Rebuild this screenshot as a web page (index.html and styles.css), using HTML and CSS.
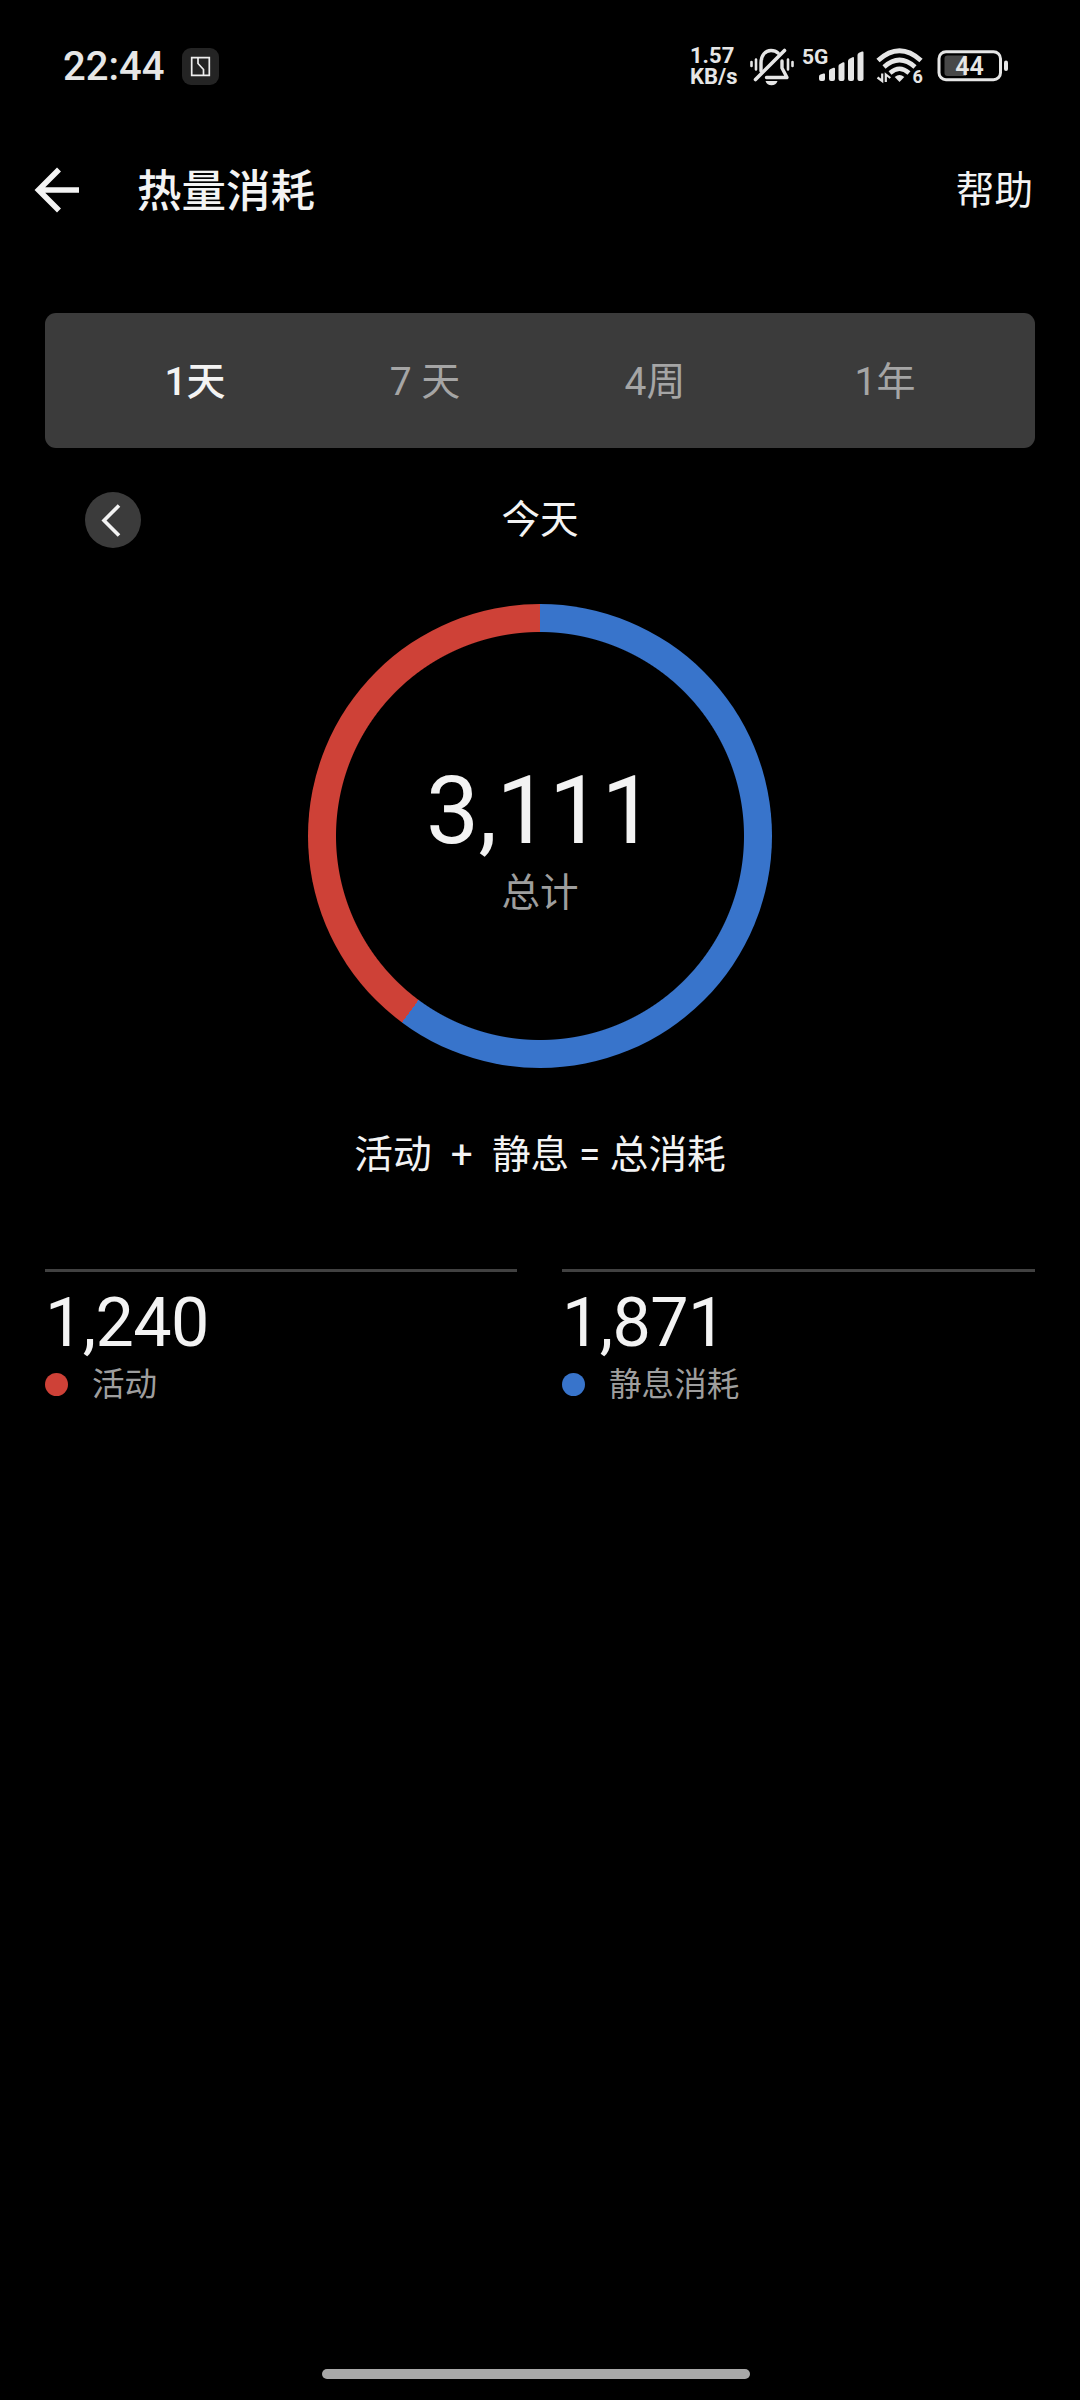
FILE: index.html
```html
<!DOCTYPE html>
<html lang="zh-CN">
<head>
  <meta charset="UTF-8">
  <meta name="viewport" content="width=device-width, initial-scale=1.0">
  <title>热量消耗</title>
  <link rel="stylesheet" href="styles.css">
</head>
<body>
  <div class="screen">

    <!-- 状态栏 -->
    <div class="status-bar">
      <span class="clock">22:44</span>
      <svg class="app-icon" width="37" height="37" viewBox="0 0 37 37" fill="none">
        <rect width="37" height="37" rx="9" fill="#242424"/>
        <path d="M9.7 9.7h17.6v17.6H9.7zM16 10v5.5l5.5 6V27" stroke="#eee" stroke-width="1.7"/>
      </svg>
      <div class="net-speed"><span>1.57</span><span>KB/s</span></div>
      <!-- 静音 -->
      <svg class="bell" width="46" height="42" viewBox="0 0 46 42" fill="none" stroke="#e6e6e6" stroke-width="3" stroke-linecap="round">
        <path d="M2.5 17v4M7 14.500v10M39 14.500v10M43.500 17v4" stroke-width="2.600"/>
        <path d="M12 26V18C12 10 16.500 5.500 22 5.500C25 5.500 27.500 6.500 29 8" stroke-width="3.400"/>
        <path d="M35.500 5.500L6.500 34.500" stroke-width="3.600"/>
        <path d="M33 16V23L38 32.500H17.500" stroke-width="3.400" stroke-linejoin="round"/>
        <path d="M16.500 36h12c-1 3-3 4.200-6 4.200s-5-1.200-6-4.200z" fill="#e6e6e6" stroke="none"/>
      </svg>
      <!-- 信号 -->
      <svg class="signal" width="64" height="44" viewBox="0 -4 64 44" fill="#e6e6e6">
        <text class="signal-text" x="0" y="15.500">5G</text>
        <path d="M17 28.500q0-1.500 1.500-2l3-1q1.500-.5 1.500 1V31q0 2-2 2h-2q-2 0-2-2z"/>
        <path d="M27 23q0-1.500 1.500-2l3-1.200q1.500-.5 1.500 1V31q0 2-2 2h-2q-2 0-2-2z"/>
        <path d="M36.500 18q0-1.500 1.500-2l3-1.700q1.500-.5 1.500 1V31q0 2-2 2h-2q-2 0-2-2z"/>
        <path d="M46 13q0-1.500 1.500-2.300l3-1.500q1.500-.5 1.500 1V31q0 2-2 2h-2q-2 0-2-2z"/>
        <path d="M55.500 7q0-1.500 1.500-2.300l3-1.200q1.500-.5 1.500 1V31q0 2-2 2h-2q-2 0-2-2z"/>
      </svg>
      <!-- WiFi -->
      <svg class="wifi" width="48" height="38" viewBox="0 0 48 38" fill="none" stroke="#e6e6e6">
        <path d="M2 13.500Q23.500-6 45 13.500" stroke-width="4.800"/>
        <path d="M8 20Q23.500 6 39 20" stroke-width="4.600"/>
        <path d="M14 26Q23.500 17.500 33 26" stroke-width="4.400"/>
        <path d="M23.500 35l-4.800-5q4.800-4 9.600 0z" fill="#e6e6e6" stroke="none"/>
        <path d="M6.200 26.500V34L1.500 30.500M9.800 35v-7.500l4.500 3.500" stroke-width="2.200"/>
        <text class="wifi-text" x="36.500" y="35.500">6</text>
      </svg>
      <!-- 电池 -->
      <svg class="battery" width="72" height="32" viewBox="0 0 72 32">
        <rect x="2" y="1.700" width="61.500" height="28" rx="7" fill="none" stroke="#e6e6e6" stroke-width="3"/>
        <path d="M29 5.500V26H10.500q-3 0-3-3V8.500q0-3 3-3z" fill="#484848"/>
        <rect x="67" y="10.500" width="4" height="10.500" rx="2" fill="#e6e6e6"/>
        <text class="battery-text" x="32.500" y="24.700">44</text>
      </svg>
    </div>

    <!-- 标题栏 -->
    <header class="header">
      <svg class="back" width="46" height="46" viewBox="0 0 46 46" fill="none" stroke="#f3f3f3" stroke-width="5.600">
        <path d="M45 23H4M25 2.500L4.500 23L25 43.500"/>
      </svg>
      <h1>热量消耗</h1>
      <a class="help">帮助</a>
    </header>

    <main>
      <nav class="tabs">
        <span class="tab active">1天</span>
        <span class="tab">7 天</span>
        <span class="tab">4周</span>
        <span class="tab">1年</span>
      </nav>

      <div class="date-row">
        <span class="prev">
          <svg width="56" height="56" viewBox="0 0 56 56" fill="none" stroke="#f3f3f3" stroke-width="3.600">
            <path d="M34 13.500L19 28.500L34 43.500"/>
          </svg>
        </span>
        <span class="date">今天</span>
      </div>

      <!-- 环形图 -->
      <div class="chart">
        <div class="total">3,111</div>
        <div class="total-label">总计</div>
      </div>

      <p class="formula">活动  +  静息 = 总消耗</p>

      <div class="stats">
        <div class="stat">
          <div class="value">1,240</div>
          <div class="label"><i class="dot red"></i><span>活动</span></div>
        </div>
        <div class="stat">
          <div class="value">1,871</div>
          <div class="label"><i class="dot blue"></i><span>静息消耗</span></div>
        </div>
      </div>
    </main>

    <div class="home-bar"></div>
  </div>
</body>
</html>
```
FILE: styles.css
```css
body {
  margin: 0;
  background-color: #000;
  color: #f3f3f3;
  font-family: Roboto, "Noto Sans CJK SC", sans-serif;
}

.screen {
  width: 1080px;
  height: 2400px;
  display: flex;
  flex-direction: column;
  overflow: hidden;
}

/* 状态栏 */
.status-bar {
  display: flex;
  align-items: center;
  height: 132px;
  padding: 0 71px 0 63px;
  box-sizing: border-box;
  color: #e6e6e6;
}

.clock {
  width: 119px;
  padding-top: 1px;
  font-size: 40px;
  font-weight: 500;
  line-height: 40px;
}

.net-speed {
  display: flex;
  flex-direction: column;
  width: 59px;
  margin-left: auto;
  font-size: 22px;
  font-weight: 700;
  line-height: 21px;
}

.bell {
  margin-right: 7px;
}

.signal {
  margin-right: 10px;
}

.wifi {
  margin-right: 13px;
}

.signal-text {
  font-size: 21px;
  font-weight: 700;
}

.wifi-text {
  font-size: 18px;
  font-weight: 700;
  fill: #e6e6e6;
  stroke: none;
}

.battery-text {
  font-size: 25px;
  font-weight: 600;
  fill: #e6e6e6;
  text-anchor: middle;
}

/* 标题栏 */
.header {
  display: flex;
  align-items: center;
  height: 116px;
  padding: 0 47px 0 34px;
}

.header h1 {
  margin: 0 0 0 57px;
  padding-top: 4px;
  font-size: 44.500px;
  font-weight: 500;
  line-height: 60px;
}

.help {
  margin-left: auto;
  padding-top: 2px;
  font-size: 38.600px;
  line-height: 60px;
}

main {
  flex: 1;
  padding: 65px 45px 0;
}

.tabs {
  display: flex;
  height: 135px;
  padding: 0 35px 6px;
  box-sizing: border-box;
  align-items: center;
  background-color: #3b3b3b;
  border-radius: 11px;
}

.tab {
  flex: 1;
  text-align: center;
  font-size: 39px;
  color: #a5a5a5;
}

.tab.active {
  font-weight: 500;
  color: #f3f3f3;
}

.date-row {
  display: grid;
  grid-template-columns: 56px 1fr 56px;
  align-items: center;
  height: 56px;
  padding: 0 40px;
  margin-top: 44px;
}

.prev {
  height: 56px;
  border-radius: 50%;
  background-color: #3b3b3b;
}

.date {
  text-align: center;
  font-size: 38.600px;
  line-height: 56px;
}

/* 蓝色为静息,红色为活动 */
.chart {
  display: flex;
  flex-direction: column;
  align-items: center;
  width: 464px;
  height: 464px;
  padding-top: 157px;
  margin: 56px auto 0;
  box-sizing: border-box;
  border-radius: 50%;
  background: radial-gradient(circle, #000 203.500px, transparent 204.500px),
    conic-gradient(#3874cb 0 60.140%, #ce4137 60.140% 100%);
}

.total {
  font-size: 94.500px;
  line-height: 100px;
  letter-spacing: -0.600px;
}

.total-label {
  padding-top: 2px;
  font-size: 38.600px;
  line-height: 60px;
  color: #9e9e9e;
}

.formula {
  margin: 57px 0 0;
  text-align: center;
  font-size: 38.700px;
  line-height: 60px;
  white-space: pre;
}

.stats {
  display: grid;
  grid-template-columns: 472px 1fr;
  gap: 45px;
  margin-top: 84px;
}

.stat {
  border-top: 3px solid #414141;
}

.value {
  padding-top: 11px;
  font-size: 68.250px;
  line-height: 80px;
  letter-spacing: -0.600px;
}

.label {
  display: flex;
  align-items: center;
  height: 42px;
  font-size: 32.600px;
  line-height: 40px;
  color: #9e9e9e;
}

.label span {
  padding-top: 2px;
}

.dot {
  width: 23px;
  height: 23px;
  margin-right: 24px;
  border-radius: 50%;
}

.dot.red {
  background-color: #ce4137;
}

.dot.blue {
  background-color: #3874cb;
}

.home-bar {
  width: 428px;
  height: 10px;
  margin: 0 0 21px 322px;
  border-radius: 5px;
  background-color: #a8a8a8;
}
```
